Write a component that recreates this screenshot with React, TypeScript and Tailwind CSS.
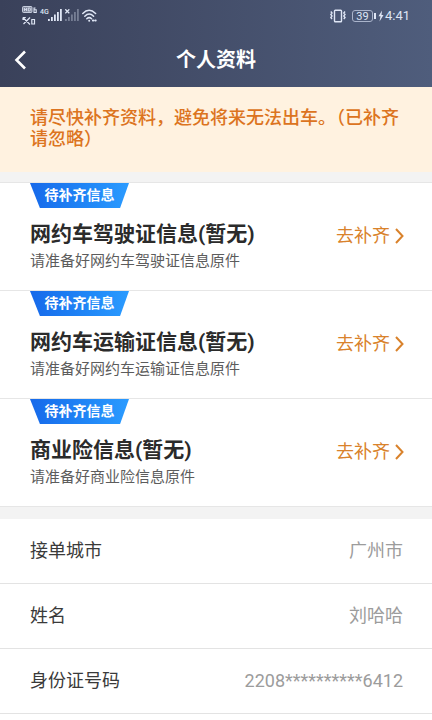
import clsx from 'clsx';

interface Todo {
    id: string;
    title: string;
    hint: string;
}

interface Field {
    label: string;
    value: string;
}

const TODOS: Todo[] = [
    { id: 'license', title: '网约车驾驶证信息(暂无)', hint: '请准备好网约车驾驶证信息原件' },
    { id: 'transport', title: '网约车运输证信息(暂无)', hint: '请准备好网约车运输证信息原件' },
    { id: 'insurance', title: '商业险信息(暂无)', hint: '请准备好商业险信息原件' },
];

const FIELDS: Field[] = [
    { label: '接单城市', value: '广州市' },
    { label: '姓名', value: '刘哈哈' },
    { label: '身份证号码', value: '2208**********6412' },
];

const CallIcons = () => (
    <svg width="16" height="20" viewBox="0 0 16 20" fill="none" stroke="currentColor">
        <rect x="0.5" y="0.5" width="9.5" height="6" rx="1" fill="currentColor" fillOpacity="0.45" strokeWidth="0.8" />
        <path d="M2.5 2v3M4.5 2v3M2.5 3.500h2M6.300 2v3h1q1.200 0 1.200-1.500T7.300 2z" strokeWidth="0.8" />
        <path d="M12 1.500v5h2.200V3.800H12M12 2h1.500" strokeWidth="1.100" />
        <path d="M1 11.500l7 7M8 11.500l-6.500 6.500M1 11.500h2.800M1 11.500v2.500" strokeWidth="1.200" />
        <path d="M9.800 13v5h2.700v-4.500H9.800" strokeWidth="1.200" />
    </svg>
);

const SignalBars = () => (
    <>
        <rect x="0" y="10" width="1.800" height="2" />
        <rect x="3" y="8" width="1.800" height="4" />
        <rect x="6" y="5.500" width="1.800" height="6.500" />
        <rect x="9" y="3" width="1.800" height="9" />
        <rect x="12" y="0" width="1.800" height="12" />
    </>
);

const Signal = ({ missing }: { missing?: boolean }) => (
    <svg width="14" height="12" viewBox="0 0 14 12" fill="currentColor">
        <g className={clsx(missing && 'opacity-35')}>
            <SignalBars />
        </g>
        {missing && <path d="M0.300 0.300l4 4M4.300 0.300l-4 4" stroke="currentColor" strokeWidth="1.300" />}
    </svg>
);

const Wifi = () => (
    <svg width="16" height="14" viewBox="0 0 16 14" fill="none" stroke="currentColor" strokeWidth="1.500" strokeLinecap="round">
        <path d="M0.800 4.500q6.200-6.500 12.800 0" />
        <path d="M2.800 7.300q4.400-4.500 8.800 0" />
        <path d="M4.800 9.800q2.400-2.300 4.800 0" />
        <circle cx="7.200" cy="11.800" r="1" fill="currentColor" stroke="none" />
        <path d="M10.800 11.500h0.600M13.200 11.500h0.600" strokeWidth="1.800" />
    </svg>
);

const Vibrate = () => (
    <svg width="16" height="14" viewBox="0 0 16 14" fill="none" stroke="currentColor">
        <rect x="4.500" y="1.200" width="7" height="11.500" rx="0.800" strokeWidth="1.400" />
        <path d="M0.800 2.500l1.200 1.500-1.200 1.500 1.200 1.500-1.200 1.500 1.200 1.500M15 2.500l-1.200 1.500 1.200 1.500-1.200 1.500 1.200 1.500-1.200 1.500" strokeWidth="1.400" />
    </svg>
);

const Bolt = () => (
    <svg width="6" height="12" viewBox="0 0 6 12" fill="currentColor">
        <path d="M4 0.500L0.500 6.300h2L1.500 11.500l4-6.500h-2z" />
    </svg>
);

const StatusBar = () => (
    <div className="flex h-8 items-center justify-between px-[22px] text-[#dfe6f5]">
        <div className="flex items-start">
            <CallIcons />
            <span className="ml-0.5 mt-0.5 w-2 text-[7px] leading-[8px] font-medium">4G</span>
            <div className="mt-[3px] flex gap-[3px]">
                <Signal />
                <Signal missing />
                <Wifi />
            </div>
        </div>
        <div className="flex items-center">
            <Vibrate />
            <span className="ml-1.5 flex h-3 w-[21px] items-center justify-center rounded-[3px] border border-[#aab4cb] text-[11px] leading-none">
                39
            </span>
            <span className="ml-px h-1.5 w-0.5 bg-current" />
            <span className="ml-0.5 mr-px">
                <Bolt />
            </span>
            <span className="text-[13px] leading-4">4:41</span>
        </div>
    </div>
);

const TodoCard = ({ todo }: { todo: Todo }) => (
    <li className="flex h-[108px] items-start justify-between border-b border-[#e6e6e6] bg-white pl-[30px] pr-[26px]">
        <div>
            <span className="flex h-[25px] w-[99px] justify-center bg-linear-to-r from-[#1769ea] to-[#2b9bff] pt-0.5 text-[14px] leading-5 font-bold text-white [clip-path:polygon(0_0,100%_0,91%_100%,10%_100%)]">
                待补齐信息
            </span>
            <h2 className="mt-3 text-[21px] leading-7 font-bold text-[#2b2b2b]">{todo.title}</h2>
            <p className="mt-[3px] text-[15px] leading-5 text-[#5c5c5c]">{todo.hint}</p>
        </div>
        <a href={`#${todo.id}`} className="mt-[41px] flex items-center gap-1 text-[18px] leading-6 text-[#d9822b]">
            去补齐
            <svg width="12" height="16" viewBox="0 0 12 16" fill="none" stroke="currentColor" strokeWidth="2">
                <path d="M2 1l6.500 7L2 15" />
            </svg>
        </a>
    </li>
);

export default function App() {
    return (
        <div className="min-h-screen bg-white font-[Roboto,'Noto_Sans_CJK_SC',sans-serif]">
            <header className="bg-linear-to-r from-[#3a415a] to-[#4f5d7c]">
                <StatusBar />
                <div className="grid h-[55px] grid-cols-[1fr_auto_1fr] items-center px-3">
                    <button aria-label="返回" className="flex h-8 w-5 items-center text-white">
                        <svg width="16" height="20" viewBox="0 0 16 20" fill="none" stroke="currentColor" strokeWidth="2.600">
                            <path d="M13 1.500L4.500 10l8.500 8.500" />
                        </svg>
                    </button>
                    <h1 className="text-[20px] leading-7 font-bold text-white">个人资料</h1>
                </div>
            </header>

            <p className="bg-[#fff2e0] pt-5 pr-6 pb-[23px] pl-[30px] text-[18px] leading-[21px] font-medium text-[#dc7420]">
                请尽快补齐资料，避免将来无法出车。（已补齐请忽略）
            </p>

            <main className="bg-[#f3f3f3] pt-2.5">
                <ul className="border-t border-[#e6e6e6]">
                    {TODOS.map((todo) => (
                        <TodoCard key={todo.id} todo={todo} />
                    ))}
                </ul>
                <dl className="mt-3 bg-white">
                    {FIELDS.map((field) => (
                        <div
                            key={field.label}
                            className="flex h-[65px] items-center justify-between border-b border-[#e3e3e3] pr-[29px] pl-[30px] text-[18px] leading-6"
                        >
                            <dt className="text-[#3a3a3a]">{field.label}</dt>
                            <dd className="text-[#9c9c9c]">{field.value}</dd>
                        </div>
                    ))}
                </dl>
            </main>
        </div>
    );
}
